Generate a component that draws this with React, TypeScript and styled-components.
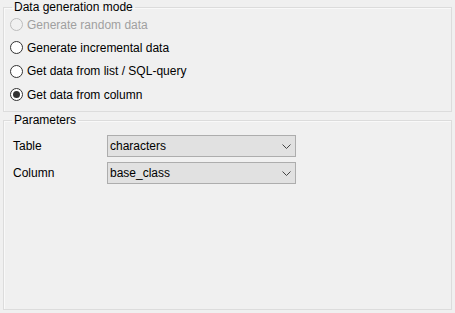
import styled, { createGlobalStyle } from "styled-components";

const GlobalStyle = createGlobalStyle`
  html, body {
    margin: 0;
    padding: 0;
    background: #f0f0f0;
  }
  body {
    font-family: "Segoe UI", "Liberation Sans", Arial, sans-serif;
    font-size: 12px;
    color: #000;
  }
`;

const Page = styled.div`
  width: 455px;
  height: 313px;
  box-sizing: border-box;
  padding: 0 3px;
  display: flex;
  flex-direction: column;
  gap: 1px;
`;

const Group = styled.fieldset<{ $grow?: boolean }>`
  margin: 0;
  padding: 0;
  min-width: 0;
  border: 1px solid #dcdcdc;
  box-shadow: inset 1px 1px 0 #f9f9f9;
  ${(p) => (p.$grow ? "flex: 1; margin-bottom: 3px;" : "")}
`;

const Legend = styled.legend`
  margin-left: 8px;
  padding: 0 2px;
  line-height: 15px;
  font-size: 12px;
`;

const RadioList = styled.div`
  display: flex;
  flex-direction: column;
  padding: 0 0 5px 6px;
  margin-top: -2px;
`;

const RadioRow = styled.label<{ $disabled?: boolean }>`
  display: flex;
  align-items: center;
  gap: 4px;
  height: 23.3px;
  color: ${(p) => (p.$disabled ? "#a0a0a0" : "#000")};
`;

const Circle = styled.span<{ $disabled?: boolean; $checked?: boolean }>`
  width: 13px;
  height: 13px;
  box-sizing: border-box;
  border-radius: 50%;
  border: 1px solid ${(p) => (p.$disabled ? "#bcbcbc" : "#333")};
  background: ${(p) => (p.$disabled ? "#f0f0f0" : "#fff")};
  display: flex;
  align-items: center;
  justify-content: center;
  flex: none;

  &::after {
    content: "";
    display: ${(p) => (p.$checked ? "block" : "none")};
    width: 7px;
    height: 7px;
    border-radius: 50%;
    background: #333;
  }
`;

const Params = styled.div`
  display: grid;
  grid-template-columns: 94px 189px;
  row-gap: 5px;
  padding: 7px 0 0 9px;
  align-items: center;
`;

const Label = styled.span`
  line-height: 15px;
`;

const Select = styled.div`
  height: 22px;
  box-sizing: border-box;
  border: 1px solid #adadad;
  background: #e1e1e1;
  display: flex;
  align-items: center;
  justify-content: space-between;
  padding: 0 4px 0 2px;
`;

const Chevron = () => (
  <svg width="9" height="5" viewBox="0 0 9 5">
    <path d="M0.5 0.5 L4.5 4.5 L8.5 0.5" fill="none" stroke="#444" strokeWidth="1" />
  </svg>
);

const modes = [
  { text: "Generate random data", disabled: true },
  { text: "Generate incremental data" },
  { text: "Get data from list / SQL-query" },
  { text: "Get data from column", checked: true },
];

export default function App() {
  return (
    <>
      <GlobalStyle />
      <Page>
        <Group>
          <Legend>Data generation mode</Legend>
          <RadioList>
            {modes.map((m) => (
              <RadioRow key={m.text} $disabled={m.disabled}>
                <Circle $disabled={m.disabled} $checked={m.checked} />
                {m.text}
              </RadioRow>
            ))}
          </RadioList>
        </Group>
        <Group $grow>
          <Legend>Parameters</Legend>
          <Params>
            <Label>Table</Label>
            <Select>
              characters
              <Chevron />
            </Select>
            <Label>Column</Label>
            <Select>
              base_class
              <Chevron />
            </Select>
          </Params>
        </Group>
      </Page>
    </>
  );
}
